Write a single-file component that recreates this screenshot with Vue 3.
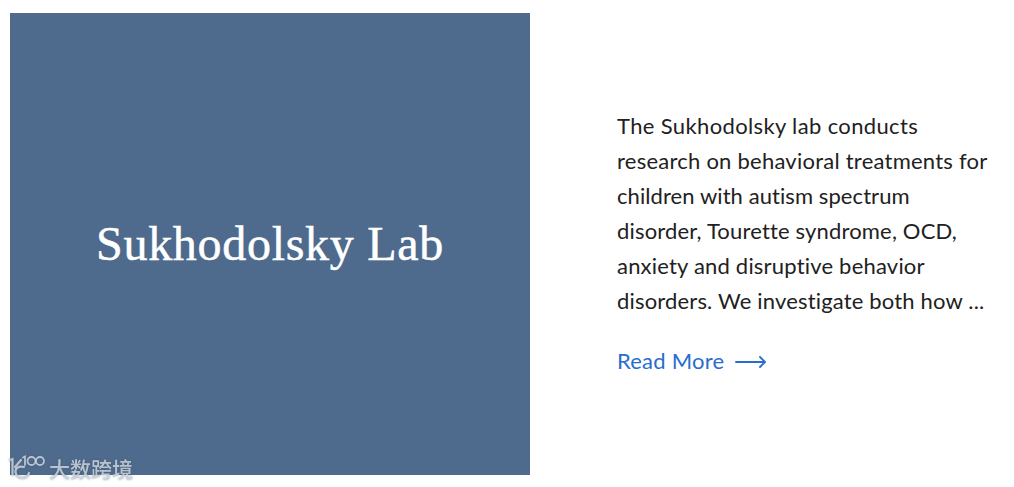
<script setup>
const lines = [
  { text: 'The Sukhodolsky lab conducts', cls: 'l1' },
  { text: 'research on behavioral treatments for', cls: 'l2' },
  { text: 'children with autism spectrum', cls: 'l3' },
  { text: 'disorder, Tourette syndrome, OCD,', cls: 'l4' },
  { text: 'anxiety and disruptive behavior', cls: 'l5' },
  { text: 'disorders. We investigate both how ...', cls: 'l6' }
]
</script>

<template>
  <div class="lab-card">
    <div class="banner">
      <h2>Sukhodolsky Lab</h2>
    </div>
    <div class="content">
      <p>
        <span v-for="line in lines" :key="line.cls" :class="line.cls">{{ line.text }}</span>
      </p>
      <a class="read-more" href="#">
        <span>Read More</span>
        <svg width="32" height="14" viewBox="0 0 32 14" fill="none" stroke="currentColor" stroke-width="1.9" stroke-linecap="round" stroke-linejoin="round">
          <path d="M1 7H30M25 2L30 7L25 12" />
        </svg>
      </a>
    </div>
    <div class="watermark">
      <svg width="38" height="26" viewBox="0 0 38 26" fill="none" stroke="currentColor" stroke-linecap="round">
        <path d="M2 6L4.500 5V21M13 6L7 13M16 13C11 11.500 7 14 7.500 18C8 22 11 24 14 24C18 24 20 22 21 19" stroke-width="2.200" />
        <path d="M15 3.500L17 2.500V11" stroke-width="1.800" />
        <circle cx="23.500" cy="7" r="4" stroke-width="1.800" />
        <circle cx="32" cy="7" r="4" stroke-width="1.800" />
      </svg>
      <span>大数跨境</span>
    </div>
  </div>
</template>

<style>
body { background: #fff; }
</style>

<style scoped>
.lab-card { position: relative; display: flex; box-sizing: border-box; height: 487px; padding: 13px 0 12px 10px; overflow: hidden; }
.banner { width: 520px; height: 462px; background: #4e6a8d; display: flex; align-items: center; justify-content: center; }
h2 { margin: 0; color: #fff; font-family: "Liberation Serif", serif; font-size: 48px; font-weight: 400; line-height: 60px; letter-spacing: 0.7px; white-space: nowrap; -webkit-text-stroke: 0.5px #fff; }
.content { margin-left: 87px; padding-top: 95px; font-family: Lato, sans-serif; font-size: 22px; line-height: 35px; color: #212121; font-variant-ligatures: none; }
p { margin: 0 0 25px; }
p span { display: block; white-space: nowrap; }
.l1 { letter-spacing: 0.36px; }
.l2 { letter-spacing: 0.24px; }
.l3 { letter-spacing: 0.08px; }
.l4 { letter-spacing: 0.17px; }
.l5 { letter-spacing: 0.2px; }
.l6 { letter-spacing: 0.17px; }
.read-more { display: flex; align-items: center; gap: 11px; color: #286dcf; text-decoration: none; letter-spacing: 0.22px; }
.read-more svg { margin-top: 2px; }
.watermark { position: absolute; left: 8px; top: 454px; display: flex; gap: 3px; color: rgba(205, 213, 223, 0.85); font-family: "Noto Sans CJK SC", sans-serif; font-size: 21px; font-weight: 500; line-height: 28px; filter: drop-shadow(0 0 1px rgba(70, 80, 95, 0.6)); }
</style>
